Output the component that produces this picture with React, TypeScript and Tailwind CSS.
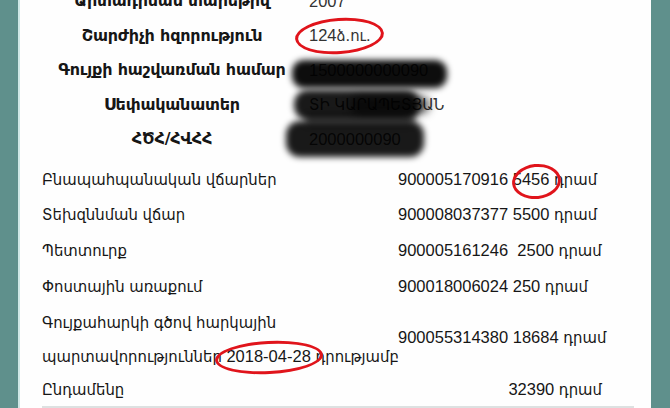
import React from "react";

const font = { fontFamily: '"Liberation Sans", "DejaVu Sans Condensed", "DejaVu Sans", sans-serif' };

const topRows: [string, string][] = [
  ["Արտադրման տարեթիվ", "2007"],
  ["Շարժիչի հզորություն", "124ձ.ու."],
  ["Գույքի հաշվառման համար", "1500000000090"],
  ["Սեփականատեր", "ՏԻ ԿԱՐԱՊԵՏՅԱՆ"],
  ["ՀԾՀ/ՀՎՀՀ", "2000000090"],
];

export default function App() {
  return (
    <div className="w-[670px] h-[408px] overflow-hidden flex bg-[#5f908c]" style={font}>
      <div className="w-[18px] h-full bg-[#5f908c]" />
      <div className="w-[2px] h-full bg-[#cfe7e6]" />
      <div className="relative flex-1 h-full bg-[#fefefe] text-[#161616] overflow-hidden">
        {/* top section */}
        <div className="relative -mt-[16px] pl-[27px]">
          {topRows.map(([l, v], i) => (
            <div key={i} className="flex items-center h-[34.5px]">
              <div className="w-[250px] text-center font-bold text-[16px] tracking-[-0.2px]" style={{ fontFamily: '"DejaVu Sans", sans-serif' }}>
                {l}
              </div>
              <div className="ml-[12px] text-[16.5px] text-[#333]">{v}</div>
            </div>
          ))}
          {/* redaction strokes */}
          <div className="absolute left-[272px] top-[76px] w-[155px] h-[28px] rounded-[12px] bg-black/95 blur-[3px]" />
          <div className="absolute left-[274px] top-[106px] w-[126px] h-[30px] rounded-[14px] bg-black/90 blur-[3px]" />
          <div className="absolute left-[330px] top-[112px] w-[80px] h-[18px] rounded-[12px] bg-black/60 blur-[4px]" />
          <div className="absolute left-[266px] top-[137px] w-[138px] h-[36px] rounded-[14px] bg-black/90 blur-[3px]" />
          <div className="absolute left-[285px] top-[131px] w-[110px] h-[10px] rounded-[8px] bg-black/60 blur-[3px]" />
          {/* red ellipse */}
          <div className="absolute left-[275px] top-[34px] w-[89px] h-[36px] rounded-[50%] border-[3px] border-[#e0141b] -rotate-[4deg]" />
        </div>

        {/* bottom section */}
        <div className="relative mt-[6px] pl-[22px] text-[16.5px]">
          <div className="flex items-center h-[34px]">
            <div className="w-[356px]">Բնապահպանական վճարներ</div>
            <div className="whitespace-pre">900005170916 5456 դրամ</div>
          </div>
          <div className="flex items-center h-[36px]">
            <div className="w-[356px]">Տեխզննման վճար</div>
            <div className="whitespace-pre">900008037377 5500 դրամ</div>
          </div>
          <div className="flex items-center h-[36px]">
            <div className="w-[356px]">Պետտուրք</div>
            <div className="whitespace-pre">900005161246  2500 դրամ</div>
          </div>
          <div className="flex items-center h-[36px]">
            <div className="w-[356px]">Փոստային առաքում</div>
            <div className="whitespace-pre">900018006024 250 դրամ</div>
          </div>
          <div className="flex items-center h-[68px]">
            <div className="w-[356px] leading-[34px]">
              <div>Գույքահարկի գծով հարկային</div>
              <div className="whitespace-nowrap">պարտավորություններ 2018-04-28 դրությամբ</div>
            </div>
            <div className="whitespace-pre -mt-[2px]">900055314380 18684 դրամ</div>
          </div>
          <div className="flex items-center h-[33px]">
            <div className="w-[356px]">Ընդամենը</div>
            <div className="w-[204px] text-right whitespace-pre">32390 դրամ</div>
          </div>
          <div className="w-[592px] h-[2px] bg-[#dde1e1]" />
          {/* red ellipses */}
          <div className="absolute left-[492px] top-[1px] w-[49px] h-[35px] rounded-[50%] border-[3px] border-[#e0141b] -rotate-[6deg]" />
          <div className="absolute left-[195px] top-[178px] w-[108px] h-[33px] rounded-[50%] border-[3px] border-[#e0141b] -rotate-[3deg]" />
        </div>
      </div>
      <div className="w-[19px] h-full bg-[#5f908c]" />
    </div>
  );
}
